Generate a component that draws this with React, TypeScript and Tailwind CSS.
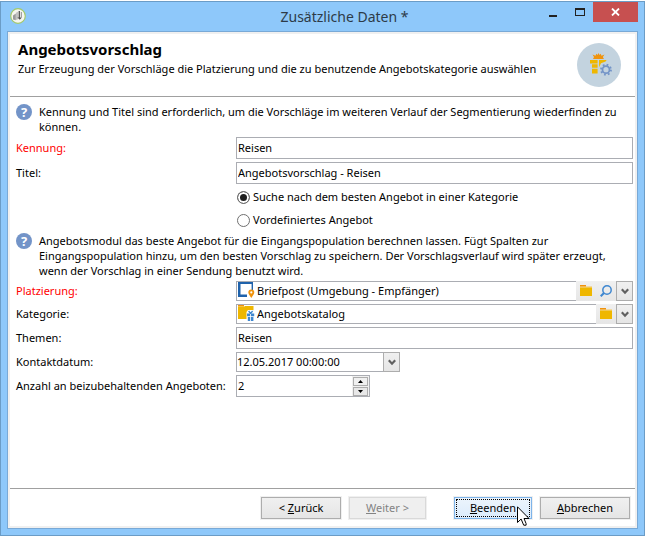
import React from "react";

function AppIcon() {
  return (
    <svg width="16" height="16" viewBox="0 0 16 16" aria-hidden="true">
      <circle cx="8" cy="8" r="7.3" fill="#f6f6f0" stroke="#a3c96a" strokeWidth="1.2" />
      <path d="M3 7.4 5.8 5.6v6.6L3 11.6z" fill="#9a9a9a" />
      <path d="M6 4.8 8 3.8v7.4l-2 .9z" fill="#c2c2c2" />
      <path d="M8.600 3h1.400v7H8.600z" fill="#5a5a5a" />
      <path d="M7.400 9.400h4.400l-2 2.400z" fill="#4a4a4a" />
      <path d="M10.800 4h1v5.400h-1z" fill="#8d8d8d" />
    </svg>
  );
}

function OfferEmblem() {
  return (
    <svg width="44" height="44" viewBox="0 0 44 44" className="shrink-0" aria-hidden="true">
      <circle cx="22" cy="22" r="22" fill="#c3d3df" />
      <path d="M15.500 11.600l3 1.200.8-2 1.200 1.200L21.500 10l1 2 1.200-1.200.8 2 3-1.200-1.600 2.400 1 2H16l1-2z" fill="#f0930c" />
      <path d="M13 17h7.600v3.600H13z M22 17h7.600l-1 1.600-4.600 1.600-2 4z M15 21.200h5.600v3.600H15z M15 25.800h5.600v4.600H15z" fill="#efb700" />
      <circle cx="29" cy="26.700" r="5" fill="none" stroke="#7394c8" strokeWidth="1.800" strokeDasharray="1.800 2.127" />
      <circle cx="29" cy="26.700" r="3.500" fill="none" stroke="#7394c8" strokeWidth="1.800" />
    </svg>
  );
}

function PlacementIcon() {
  return (
    <svg width="17" height="17" viewBox="0 0 17 17" className="shrink-0" aria-hidden="true">
      <path d="M0 0h15v8h-1.400V2H2.500v10.500H9V15H0z" fill="#1f62ab" />
      <path d="M13.300 7.400a3 3 0 0 1 3 3c0 2-1.800 3-3 5.600-1.200-2.600-3-3.600-3-5.600a3 3 0 0 1 3-3z" fill="#f0930c" />
      <circle cx="13.300" cy="10.400" r="1.100" fill="#fff" />
    </svg>
  );
}

function CatalogIcon() {
  return (
    <svg width="17" height="17" viewBox="0 0 17 17" className="shrink-0" aria-hidden="true">
      <path d="M0 0h6v1.500H0z" fill="#f0930c" />
      <path d="M0 1.500h6.500l.5-.5h8.500v13H0z" fill="#efb700" />
      <path d="M8.500 7 10 5h5.500l1.500 2v9H8.500z" fill="#fff" />
      <path d="M9 8.500h3.200v2.700H9z M13 8.500h3.200v2.700H13z M9.800 12h2.400v4H9.800z M13 12h2.400v4H13z" fill="#3f87d0" />
      <path d="M12.600 8.500 10.600 6M12.600 8.500l2-2.500" stroke="#3f87d0" strokeWidth="1.300" fill="none" />
    </svg>
  );
}

function FolderIcon() {
  return (
    <svg width="12" height="12" viewBox="0 0 12 12" aria-hidden="true">
      <path d="M0 1h12v2H0z" fill="#f3d9a0" />
      <path d="M0 0h6v1.500H0z" fill="#f0930c" />
      <path d="M0 2.500h12V11H0z" fill="#efb700" />
    </svg>
  );
}

function SearchIcon() {
  return (
    <svg width="12" height="12" viewBox="0 0 12 12" fill="none" stroke="#3f87d0" aria-hidden="true">
      <circle cx="7" cy="5" r="4.200" strokeWidth="1.500" />
      <path d="M4 8 .7 11.300" strokeWidth="2" />
    </svg>
  );
}

function Chevron() {
  return (
    <svg width="8" height="7" viewBox="0 0 8 7" fill="none" stroke="#606060" strokeWidth="2.200" aria-hidden="true">
      <path d="M.8 1.200 4 4.700l3.200-3.500" />
    </svg>
  );
}

function Pointer() {
  return (
    <svg width="13" height="21" viewBox="0 0 13 21" className="pointer-events-none absolute left-[62px] top-2" aria-hidden="true">
      <path d="M.5.8v15.700l3.600-3.500 2.600 6.200h2.400v-1.600L7 12.500h5z" fill="#fff" stroke="#000" />
    </svg>
  );
}

const fieldBox = "flex w-full border border-[#abadb3] bg-white";
const inputText = "min-w-0 flex-1 bg-transparent px-px pb-0.5 outline-none";

function Row({ id, label, required, children }: { id: string; label: string; required?: boolean; children: React.ReactNode }) {
  return (
    <div className="grid grid-cols-[220px_minmax(0,1fr)]">
      <label htmlFor={id} className={required ? "self-center pb-0.5 text-[#ff0000]" : "self-center pb-0.5"}>
        {label}
      </label>
      {children}
    </div>
  );
}

function TextField({ id, value }: { id: string; value: string }) {
  return (
    <div className={`${fieldBox} h-[22px]`}>
      <input id={id} defaultValue={value} className={inputText} />
    </div>
  );
}

function DropButton({ label }: { label: string }) {
  return (
    <button aria-label={label} className="flex w-[17px] items-center justify-center border border-[#adadad] bg-linear-to-b from-[#f0f0f0] to-[#e5e5e5]">
      <Chevron />
    </button>
  );
}

function ToolButton({ label, children }: { label: string; children: React.ReactNode }) {
  return (
    <button aria-label={label} className="flex w-5 items-center justify-center bg-linear-to-b from-[#f0f0f0] to-[#e6e6e6]">
      {children}
    </button>
  );
}

function Picker({ id, value, icon, children }: { id: string; value: string; icon: React.ReactNode; children: React.ReactNode }) {
  return (
    <div className="flex h-5">
      <div className="flex min-w-0 flex-1 gap-px border border-r-0 border-[#abadb3] bg-white pl-px">
        {icon}
        <input id={id} defaultValue={value} className={inputText} />
      </div>
      {children}
      <DropButton label={`${value} ändern`} />
    </div>
  );
}

function Hint({ children }: { children: React.ReactNode }) {
  return (
    <div className="flex gap-[7px]">
      <span className="flex size-4 shrink-0 items-center justify-center rounded-full bg-[#7394c8] text-[13px] leading-4 font-bold text-white">?</span>
      <p>{children}</p>
    </div>
  );
}

function Choice({ label, checked }: { label: string; checked?: boolean }) {
  return (
    <label className="ml-[221px] flex h-5 items-center gap-[3px]">
      <input
        type="radio"
        name="mode"
        defaultChecked={checked}
        className="size-[13px] shrink-0 appearance-none rounded-full border border-[#707070] bg-white checked:bg-[#1e1e1e] checked:shadow-[inset_0_0_0_2px_white]"
      />
      <span className="pb-0.5">{label}</span>
    </label>
  );
}

const plainButton = "h-[22px] border border-[#adadad] bg-linear-to-b from-[#f0f0f0] to-[#e5e5e5] pb-0.5 outline outline-[#f0f0f0]";

export default function App() {
  return (
    <div className="flex min-h-screen flex-col bg-white pt-px pr-[14px] pb-[14px] font-['Noto_Sans',sans-serif] text-[11px] leading-[15px] text-black">
      <div className="flex flex-1 flex-col border border-[#6b9cc6] bg-[#8ec8fa] px-1.5 pb-1.5">
        <div className="flex h-[29px] items-start">
          <div className="pt-1.5 pl-[3px]">
            <AppIcon />
          </div>
          <h1 className="flex-1 pl-[124px] text-center text-[14px] leading-[30px] text-[#2d3b48]">Zusätzliche Daten *</h1>
          <button aria-label="Minimieren" className="flex h-5 w-[27px] items-end justify-center pb-[5px]">
            <span className="h-0.5 w-2 bg-[#222]" />
          </button>
          <button aria-label="Maximieren" className="flex h-5 w-[27px] items-center justify-center">
            <span className="h-2 w-2.5 border border-t-2 border-[#222]" />
          </button>
          <button aria-label="Schließen" className="flex h-5 w-[45px] items-center justify-center bg-[#c75050]">
            <svg width="9" height="8" viewBox="0 0 9 8" stroke="#fff" strokeWidth="1.800" aria-hidden="true">
              <path d="M1 .5l7 7M8 .5l-7 7" />
            </svg>
          </button>
        </div>

        <div className="flex flex-1 flex-col border border-[#79a9d6] bg-[#f0f0f0] p-0.5">
          <div className="flex flex-1 flex-col bg-white">
            <header className="flex h-[63px] items-center justify-between border-b border-[#a0a0a0] pr-[14px] pl-2">
              <div className="pb-3 leading-5">
                <h2 className="text-[15px] font-bold">Angebotsvorschlag</h2>
                <p>Zur Erzeugung der Vorschläge die Platzierung und die zu benutzende Angebotskategorie auswählen</p>
              </div>
              <OfferEmblem />
            </header>

            <main className="flex flex-1 flex-col gap-[3px] pt-[7px] pr-0.5 pl-1.5">
              <Hint>
                Kennung und Titel sind erforderlich, um die Vorschläge im weiteren Verlauf der Segmentierung wiederfinden zu
                <br />
                können.
              </Hint>
              <Row id="key" label="Kennung:" required>
                <TextField id="key" value="Reisen" />
              </Row>
              <Row id="title" label="Titel:">
                <TextField id="title" value="Angebotsvorschlag - Reisen" />
              </Row>
              <Choice label="Suche nach dem besten Angebot in einer Kategorie" checked />
              <Choice label="Vordefiniertes Angebot" />
              <Hint>
                Angebotsmodul das beste Angebot für die Eingangspopulation berechnen lassen. Fügt Spalten zur
                <br />
                Eingangspopulation hinzu, um den besten Vorschlag zu speichern. Der Vorschlagsverlauf wird später erzeugt,
                <br />
                wenn der Vorschlag in einer Sendung benutzt wird.
              </Hint>
              <Row id="place" label="Platzierung:" required>
                <Picker id="place" value="Briefpost (Umgebung - Empfänger)" icon={<PlacementIcon />}>
                  <ToolButton label="Ordner wählen">
                    <FolderIcon />
                  </ToolButton>
                  <ToolButton label="Suchen">
                    <SearchIcon />
                  </ToolButton>
                </Picker>
              </Row>
              <Row id="category" label="Kategorie:">
                <Picker id="category" value="Angebotskatalog" icon={<CatalogIcon />}>
                  <ToolButton label="Ordner wählen">
                    <FolderIcon />
                  </ToolButton>
                </Picker>
              </Row>
              <Row id="topics" label="Themen:">
                <TextField id="topics" value="Reisen" />
              </Row>
              <Row id="date" label="Kontaktdatum:">
                <div className="flex h-5 w-[164px]">
                  <div className="flex min-w-0 flex-1 border border-r-0 border-[#abadb3] bg-white">
                    <input id="date" defaultValue="12.05.2017 00:00:00" className="min-w-0 flex-1 pb-0.5 outline-none" />
                  </div>
                  <DropButton label="Kalender öffnen" />
                </div>
              </Row>
              <Row id="count" label="Anzahl an beizubehaltenden Angeboten:">
                <div className="flex h-[22px] w-[134px] border border-[#abadb3] bg-white">
                  <input id="count" defaultValue="2" inputMode="numeric" className={inputText} />
                  <div className="flex flex-col justify-center gap-px bg-[#f0f0f0] px-px">
                    <button aria-label="Erhöhen" className="flex h-[9px] w-[15px] items-center justify-center border border-[#adadad] bg-[#f0f0f0]">
                      <svg width="5" height="3" viewBox="0 0 5 3" aria-hidden="true">
                        <path d="M0 3 2.500 0 5 3z" />
                      </svg>
                    </button>
                    <button aria-label="Verringern" className="flex h-[9px] w-[15px] items-center justify-center border border-[#adadad] bg-[#e8e8e8]">
                      <svg width="5" height="3" viewBox="0 0 5 3" aria-hidden="true">
                        <path d="M0 0 2.500 3 5 0z" />
                      </svg>
                    </button>
                  </div>
                </div>
              </Row>
            </main>

            <footer className="flex justify-end gap-2 border-t border-[#a0a0a0] pt-2 pr-[5px] pb-[7px]">
              <button className={`${plainButton} w-20`}>
                &lt; <u>Z</u>urück
              </button>
              <button disabled className="mr-5 h-[22px] w-[77px] border border-[#d9d9d9] bg-[#efefef] pb-0.5 text-[#838383] outline outline-[#f0f0f0]">
                <u>W</u>eiter &gt;
              </button>
              <button className="relative h-[22px] w-[78px] border border-[#7eb4ea] bg-linear-to-b from-[#ecf4fc] to-[#dcecfc] p-px outline outline-[#f0f0f0]">
                <span className="flex h-full items-center justify-center border border-dotted border-black pb-0.5">
                  <span>
                    <u>B</u>eenden
                  </span>
                </span>
                <Pointer />
              </button>
              <button className={`${plainButton} w-[90px]`}>
                <u>A</u>bbrechen
              </button>
            </footer>
          </div>
        </div>
      </div>
    </div>
  );
}
